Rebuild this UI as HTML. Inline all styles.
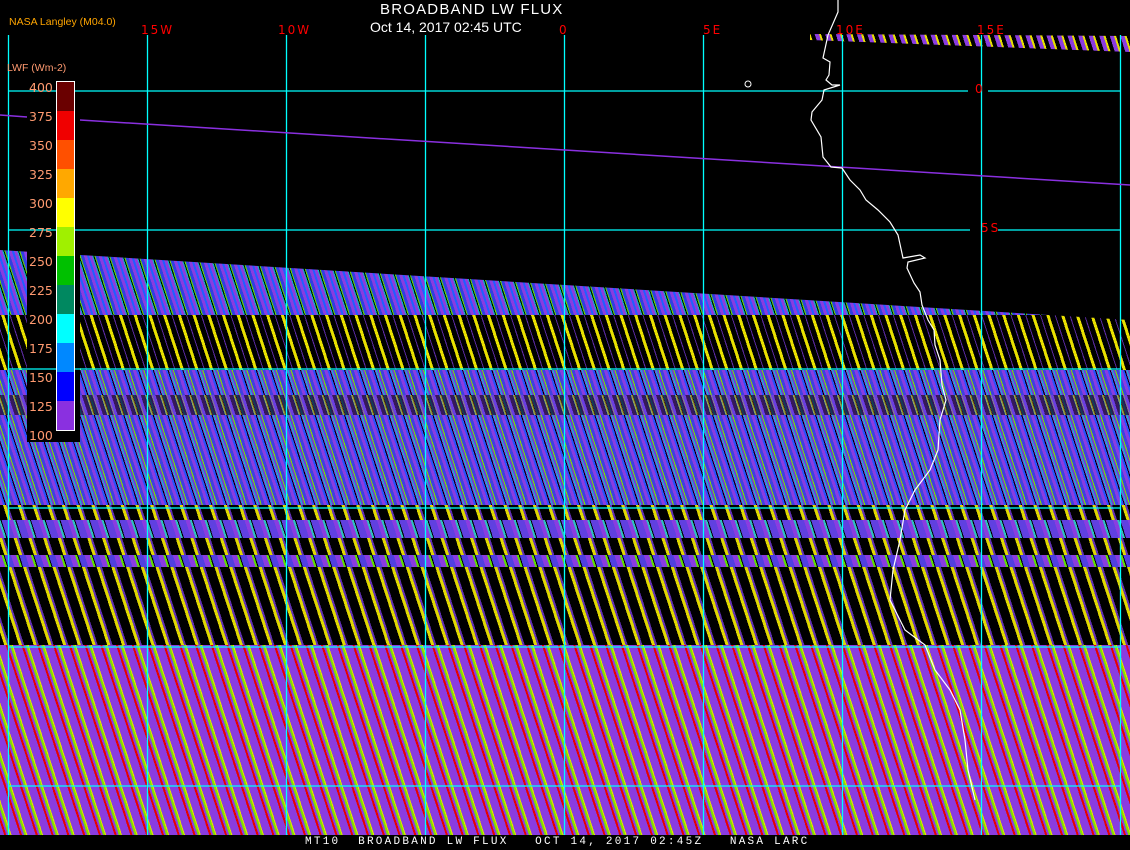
<!DOCTYPE html>
<html><head><meta charset="utf-8"><style>
html,body{margin:0;padding:0;background:#000;}
#c{position:relative;width:1130px;height:850px;overflow:hidden;background:#000;font-family:"Liberation Sans",sans-serif;}
#data{position:absolute;left:0;top:245px;width:1130px;height:590px;clip-path:polygon(0 5px,1130px 75px,1130px 590px,0 590px);}
.b{position:absolute;left:0;width:1130px;}
.t{position:absolute;color:#f00;font-size:12px;letter-spacing:2px;font-family:"DejaVu Sans",sans-serif;}
</style></head><body><div id="c">
<div id="data">
 <div class="b" style="top:0;height:70px;background:repeating-linear-gradient(72deg,#8a3ce0 0 3px,#2060ff 3px 5px,#8a3ce0 5px 8px,#00c0c0 8px 9px,#000 9px 10px,#60e000 10px 11px,#3040e0 11px 14px);"></div>
 <div class="b" style="top:70px;height:55px;background:repeating-linear-gradient(72deg,#000 0 4px,#e8e000 4px 7px,#000 7px 12px,#5a2aa0 12px 13px,#000 13px 14px);"></div>
 <div class="b" style="top:125px;height:135px;background:repeating-linear-gradient(72deg,#8a3ce0 0 3px,#2a50ff 3px 5px,#000 5px 6px,#8a3ce0 6px 7px,#00c8d0 7px 8px,#7040d0 8px 10px,#80e000 10px 11px,#4040e0 11px 14px);"></div>
 <div class="b" style="top:150px;height:20px;background:repeating-linear-gradient(72deg,#000 0 4px,#d8d000 4px 6px,#000 6px 10px,#8a3ce0 10px 14px);opacity:.6"></div>
 <div class="b" style="top:260px;height:140px;background:repeating-linear-gradient(72deg,#000 0 4px,#e0d800 4px 7px,#6030b0 7px 9px,#000 9px 14px);"></div>
 <div class="b" style="top:275px;height:18px;background:repeating-linear-gradient(72deg,#8a3ce0 0 4px,#30c0c0 4px 6px,#000 6px 7px,#6040e0 7px 14px);"></div>
 <div class="b" style="top:310px;height:12px;background:repeating-linear-gradient(72deg,#8a3ce0 0 5px,#60e000 5px 7px,#000 7px 8px,#5040e0 8px 14px);"></div>
 <div class="b" style="top:400px;height:190px;background:repeating-linear-gradient(72deg,#8a3ce0 0 4px,#e80000 4px 6px,#8a3ce0 6px 8px,#80e000 8px 10px,#e8e000 10px 11px,#8a3ce0 11px 15px);"></div>
</div>
<div style="position:absolute;left:810px;top:34px;width:320px;height:18px;clip-path:polygon(0 0,320px 2px,320px 18px,0 6px);background:repeating-linear-gradient(72deg,#8a3ce0 0 4px,#e8e000 4px 6px,#000 6px 10px);"></div>
<div style="position:absolute;left:27px;top:60px;width:53px;height:382px;background:#000"></div>
<svg width="1130" height="850" style="position:absolute;left:0;top:0">
 <g stroke="#00ffff" stroke-width="1.3" fill="none">
  <path d="M8.5 35V835M147.5 35V835M286.5 35V835M425.5 35V835M564.5 35V835M703.5 35V835M842.5 35V835M981.5 35V835M1120.5 35V835"/>
  <path d="M8 91H968M988 91H1120M8 230H970M998 230H1120M8 369H1120M8 508H1120M8 647H1120M8 786H1120"/>
 </g>
 <path d="M0 115L27 117M80 120L1130 185" stroke="#8a30e0" stroke-width="1.5" fill="none"/>
 <path d="M838 0V12L828 35L823 58L830 62L829 75L826 80L832 85L840 85L824 90L822 100L812 112L811 120L821 137L823 157L831 167L842 168L850 180L860 190L866 200L878 210L890 222L898 235L903 258L920 255L925 258L908 262L907 268L914 283L920 292L922 305L928 320L934 330L935 345L940 360L942 385L946 400L940 420L938 450L930 470L915 490L905 510L900 540L893 570L890 600L905 630L925 645L935 670L950 690L960 710L965 740L968 770L975 800" stroke="#fff" stroke-width="1.2" fill="none"/>
 <ellipse cx="748" cy="84" rx="3" ry="3" stroke="#fff" fill="none"/>
</svg>
<div style="position:absolute;left:56px;top:81px;width:17px;height:348px;border:1px solid #fff;background:linear-gradient(#6a0000 0 29px,#f00000 29px 58px,#ff5000 58px 87px,#ffa800 87px 116px,#ffff00 116px 145px,#a0f000 145px 174px,#00c000 174px 203px,#008860 203px 232px,#00ffff 232px 261px,#0088ff 261px 290px,#0000ff 290px 319px,#8a30e0 319px 348px);"></div>
<div class="t" style="left:141px;top:23px">15W</div>
<div class="t" style="left:278px;top:23px">10W</div>
<div class="t" style="left:559px;top:23px">0</div>
<div class="t" style="left:703px;top:23px">5E</div>
<div class="t" style="left:836px;top:23px">10E</div>
<div class="t" style="left:977px;top:23px">15E</div>
<div class="t" style="left:975px;top:82px">0</div>
<div class="t" style="left:981px;top:221px">5S</div>
<div style="position:absolute;left:380px;top:1px;color:#fff;font-size:15px;letter-spacing:1.2px;">BROADBAND LW FLUX</div>
<div style="position:absolute;left:370px;top:19px;color:#fff;font-size:14px;">Oct 14, 2017 02:45 UTC</div>
<div style="position:absolute;left:9px;top:16px;color:#ffa500;font-size:10.5px;">NASA Langley (M04.0)</div>
<div style="position:absolute;left:7px;top:62px;color:#ff9a70;font-size:10.5px;">LWF (Wm-2)</div>
<div style="position:absolute;left:29px;top:73px;color:#ff9a70;font-size:12.5px;line-height:29px;font-family:'DejaVu Sans',sans-serif;">400<br>375<br>350<br>325<br>300<br>275<br>250<br>225<br>200<br>175<br>150<br>125<br>100</div>
<div style="position:absolute;left:0;top:835px;width:1130px;height:15px;background:#000;color:#fff;font-size:11px;font-family:'Liberation Mono',monospace;white-space:pre;line-height:15px;"><span style="position:absolute;left:305px;letter-spacing:2.25px">MT10  BROADBAND LW FLUX   OCT 14, 2017 02:45Z   NASA LARC</span></div>
</div></body></html>
